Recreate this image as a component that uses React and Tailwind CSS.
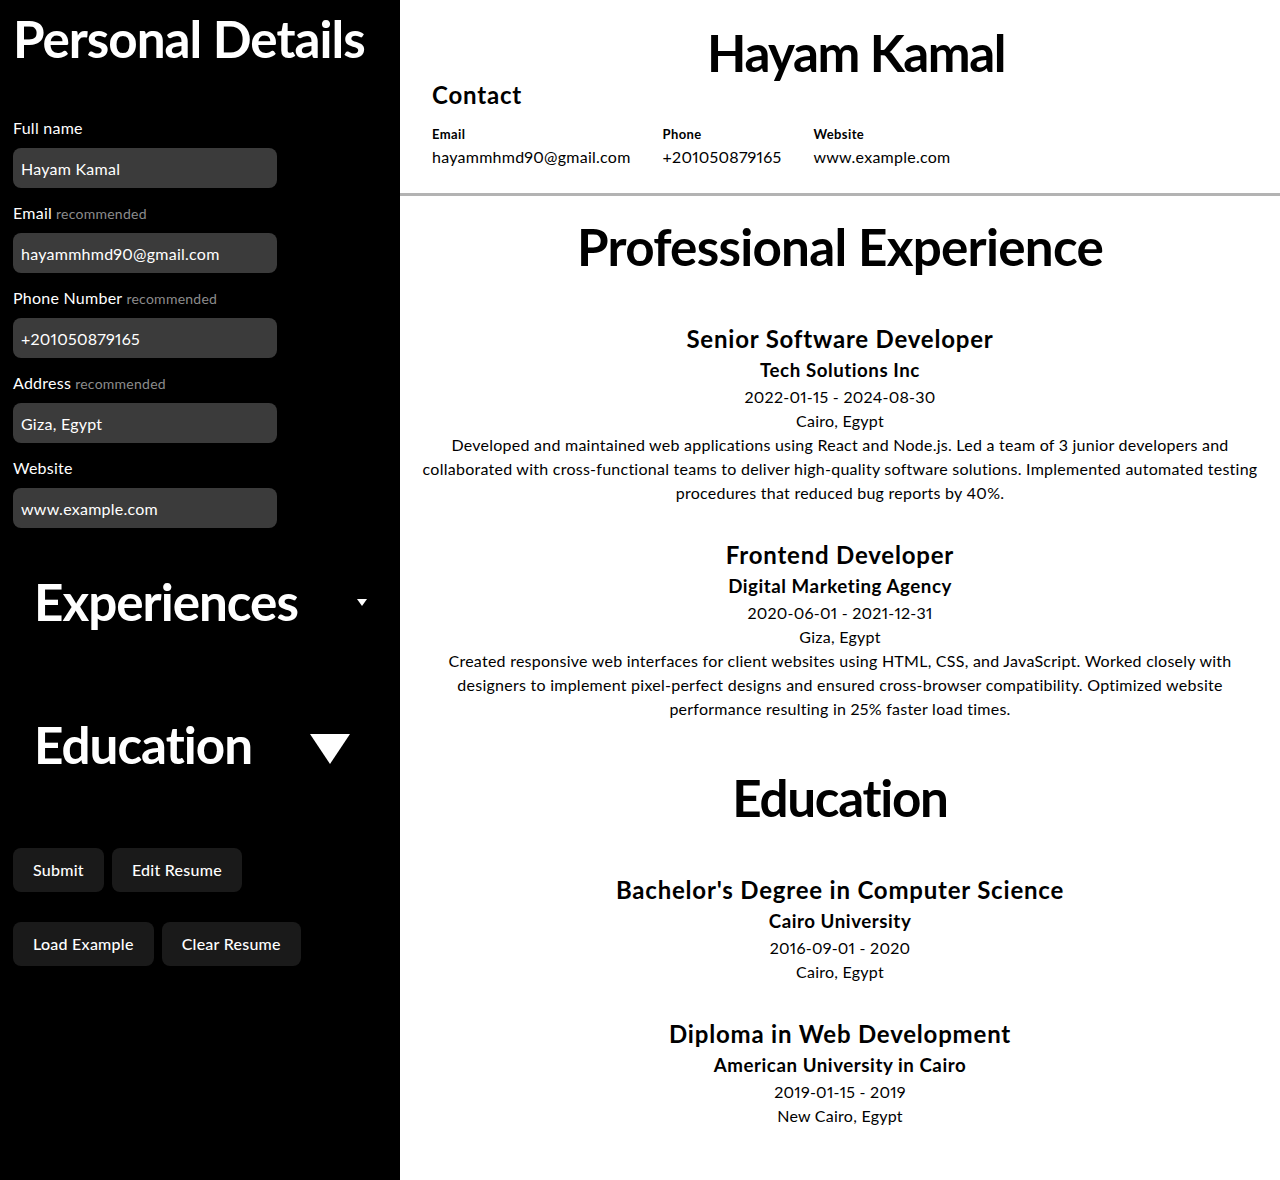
import React from 'react';

const fields = [
  { label: 'Full name', value: 'Hayam Kamal' },
  { label: 'Email', value: 'hayammhmd90@gmail.com', hint: true },
  { label: 'Phone Number', value: '+201050879165', hint: true },
  { label: 'Address', value: 'Giza, Egypt', hint: true },
  { label: 'Website', value: 'www.example.com' },
];

const experiences = [
  {
    title: 'Senior Software Developer',
    company: 'Tech Solutions Inc',
    dates: '2022-01-15 - 2024-08-30',
    location: 'Cairo, Egypt',
    description:
      'Developed and maintained web applications using React and Node.js. Led a team of 3 junior developers and collaborated with cross-functional teams to deliver high-quality software solutions. Implemented automated testing procedures that reduced bug reports by 40%.',
  },
  {
    title: 'Frontend Developer',
    company: 'Digital Marketing Agency',
    dates: '2020-06-01 - 2021-12-31',
    location: 'Giza, Egypt',
    description:
      'Created responsive web interfaces for client websites using HTML, CSS, and JavaScript. Worked closely with designers to implement pixel-perfect designs and ensured cross-browser compatibility. Optimized website performance resulting in 25% faster load times.',
  },
];

const education = [
  { title: "Bachelor's Degree in Computer Science", company: 'Cairo University', dates: '2016-09-01 - 2020', location: 'Cairo, Egypt' },
  { title: 'Diploma in Web Development', company: 'American University in Cairo', dates: '2019-01-15 - 2019', location: 'New Cairo, Egypt' },
];

const Entry = ({ item }) => (
  <div className="mb-[35px] text-center">
    <h2 className="text-2xl font-bold leading-[30px] tracking-[0.8px]">{item.title}</h2>
    <h3 className="mt-[4px] text-[18.72px] font-bold leading-[24px] tracking-[0.55px]">{item.company}</h3>
    <p className="mt-[3px] leading-[24px]">{item.dates}</p>
    <p className="leading-[24px]">{item.location}</p>
    {item.description && <p className="leading-[24px]">{item.description}</p>}
  </div>
);

export default function App() {
  return (
    <div className="flex min-h-[1180px] font-['Lato','Noto_Sans',sans-serif] text-base tracking-[0.25px] proportional-nums">
      <aside className="w-[400px] shrink-0 bg-black px-[13px] pt-[10px] text-white">
        <h1 className="text-[51.2px] font-bold leading-[56px] tracking-[-1px]">Personal Details</h1>

        <div className="mt-[50px] flex flex-col gap-[13px]">
          {fields.map(f => (
            <div key={f.label} className="flex flex-col">
              <label className="block h-6 leading-6">
                {f.label}
                {f.hint && <span className="ml-1 text-sm leading-6 text-[#8c8c8c]">recommended</span>}
              </label>
              <input
                readOnly
                value={f.value}
                className="mt-2 h-10 w-[264px] rounded-lg bg-[#3b3b3b] px-2 text-white outline-none"
              />
            </div>
          ))}
        </div>

        <div className="mt-[45px] flex items-center pl-[21px]">
          <h2 className="w-[322px] text-[51.2px] font-bold leading-[56px] tracking-[-1px]">Experiences</h2>
          <svg width="10" height="7" viewBox="0 0 10 7" className="ml-[1px] mt-[2px]">
            <polygon points="0,0 10,0 5,7" fill="white" />
          </svg>
        </div>

        <div className="mt-[87px] flex items-center pl-[21px]">
          <h2 className="w-[276px] text-[51.2px] font-bold leading-[56px] tracking-[-1px]">Education</h2>
          <svg width="40" height="30" viewBox="0 0 40 30" className="mt-[9px]">
            <polygon points="0,0 40,0 20,30" fill="white" />
          </svg>
        </div>

        <div className="mt-[76px] flex gap-2">
          <button className="h-11 rounded-lg bg-[#1a1a1a] px-5 font-medium">Submit</button>
          <button className="h-11 rounded-lg bg-[#1a1a1a] px-5 font-medium">Edit Resume</button>
        </div>
        <div className="mt-[30px] flex gap-2">
          <button className="h-11 rounded-lg bg-[#1a1a1a] px-5 font-medium">Load Example</button>
          <button className="h-11 rounded-lg bg-[#1a1a1a] px-5 font-medium">Clear Resume</button>
        </div>
      </aside>

      <main className="flex-1 bg-white text-black">
        <header className="pl-8 pt-[24px]">
          <h1 className="text-center text-[51.2px] font-bold leading-[56px] tracking-[-1.5px]">Hayam Kamal</h1>
          <h2 className="text-2xl font-bold leading-[30px] tracking-[0.8px]">Contact</h2>
          <div className="mt-4 flex gap-8">
            <div>
              <div className="text-[13px] font-bold leading-4 tracking-[0.4px]">Email</div>
              <div className="mt-[3px] leading-6">hayammhmd90@gmail.com</div>
            </div>
            <div>
              <div className="text-[13px] font-bold leading-4 tracking-[0.4px]">Phone</div>
              <div className="mt-[3px] leading-6">+201050879165</div>
            </div>
            <div>
              <div className="text-[13px] font-bold leading-4 tracking-[0.4px]">Website</div>
              <div className="mt-[3px] leading-6">www.example.com</div>
            </div>
          </div>
        </header>
        <div className="mt-6 h-[3px] bg-[#b3b3b3]" />

        <section className="px-5 pt-[22px]">
          <h1 className="text-center text-[51.2px] font-bold leading-[56px] tracking-[-0.75px]">Professional Experience</h1>
          <div className="mt-[50px]">
            {experiences.map(e => (
              <Entry key={e.title} item={e} />
            ))}
          </div>
        </section>

        <section className="px-5 pt-[13px]">
          <h1 className="text-center text-[51.2px] font-bold leading-[56px] tracking-[-1.3px]">Education</h1>
          <div className="mt-[50px]">
            {education.map(e => (
              <Entry key={e.title} item={e} />
            ))}
          </div>
        </section>
      </main>
    </div>
  );
}
